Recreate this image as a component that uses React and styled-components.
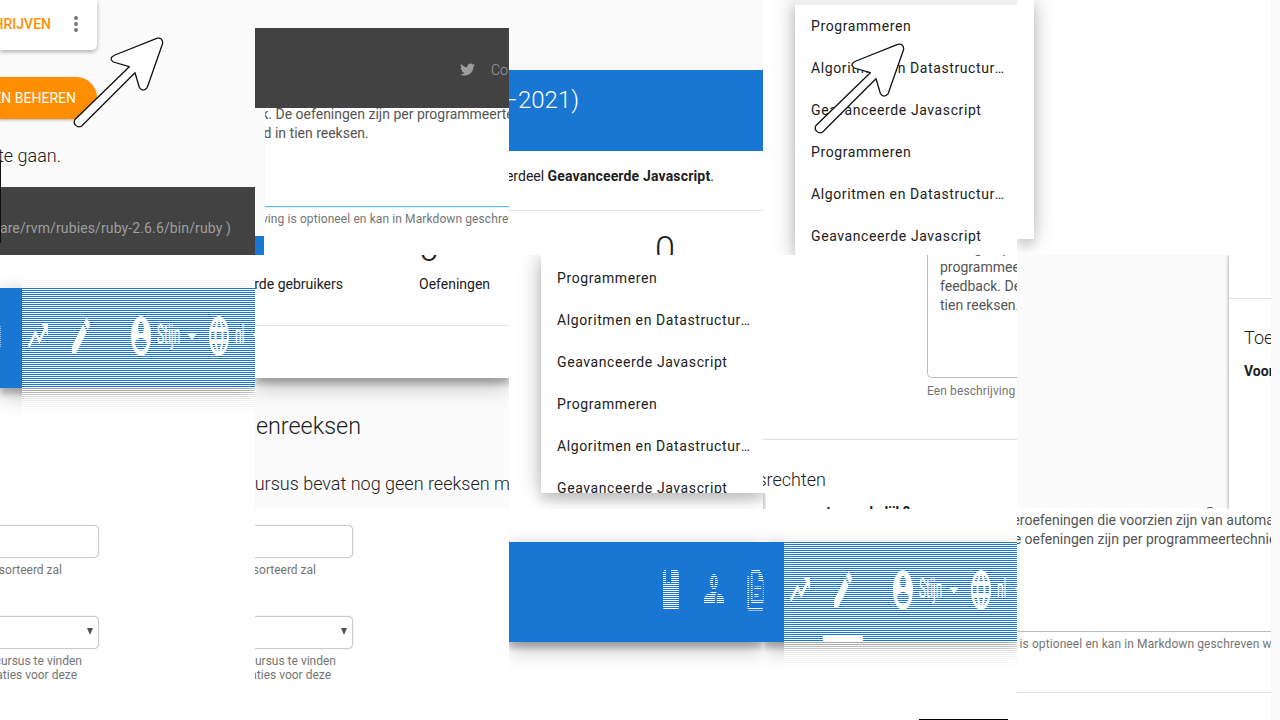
import React from "react";
import styled, { createGlobalStyle, css } from "styled-components";
import { MdLanguage } from "react-icons/md";
import { FaTwitter } from "react-icons/fa";

const BLUE = "#1976d2";
const LIFT = "0 10px 20px rgba(0,0,0,.19), 0 6px 6px rgba(0,0,0,.23), 0 -2px 16px rgba(0,0,0,.08)";
const MENU_LIFT = "0 0 22px rgba(0,0,0,.26), 0 8px 10px rgba(0,0,0,.12)";

const Global = createGlobalStyle`
  html, body { margin: 0; padding: 0; background: #fff; }
  body { font-family: Roboto, "Liberation Sans", sans-serif; font-size: 14px; color: #212121; }
`;

const Stage = styled.div`
  width: 1280px;
  height: 720px;
  overflow: hidden;
  display: grid;
  grid-template-columns: 255px 254px 254px 254px 254px 9px;
  grid-template-rows: 255px 254px 211px;
`;

const Tile = styled.section`
  position: relative;
  overflow: hidden;
  min-width: 0;
  background: ${(p) => p.$bg || "#fff"};
`;

const Edge = styled.div`
  grid-column: 6;
  grid-row: 1 / 4;
  background: #fafafa;
`;

const Ending = styled.div`
  display: flex;
  justify-content: flex-end;
  white-space: nowrap;
  width: ${(p) => p.$end}px;
`;

const Divider = styled.div`
  height: 1px;
  background: ${(p) => p.$color || "#e0e0e0"};
  margin-top: ${(p) => p.$top || 0}px;
`;

/* cursor arrow */
const ArrowSvg = styled.svg`
  position: absolute;
  left: ${(p) => p.$x}px;
  top: ${(p) => p.$y}px;
  width: 100px;
  height: 100px;
  z-index: 3;
`;
const Arrow = ({ x, y }) => (
  <ArrowSvg $x={x} $y={y} viewBox="0 0 100 100">
    <path
      d="M45 20 L86.7 3.3 Q92.7 2 92.7 8.3 L77.3 52.3 Q73 58 69.3 52.3 L65 37.7 L11.7 91 A4.8 4.8 0 0 1 5 84.5 L59.3 31.7 L43.3 27 Q38 23 45 20Z"
      fill="#fff"
      stroke="#111"
      strokeWidth="1.3"
      strokeLinejoin="round"
    />
  </ArrowSvg>
);

/* top-left tile */
const ActionCard = styled.div`
  width: 97px;
  height: 50px;
  padding: 0 9px 2px 0;
  box-sizing: border-box;
  display: flex;
  justify-content: flex-end;
  align-items: center;
  gap: 13px;
  background: #fff;
  border-radius: 0 0 5px 0;
  box-shadow: 0 2px 4px rgba(0,0,0,.3);
  overflow: hidden;
`;
const ActionText = styled.span`
  color: #ff8f00;
  font-weight: 500;
  white-space: nowrap;
`;
const DotsIcon = styled.svg`
  width: 24px;
  height: 24px;
  flex: none;
  fill: #757575;
`;
const ManageButton = styled.div`
  width: 97px;
  height: 42px;
  margin-top: 27px;
  padding-right: 21px;
  box-sizing: border-box;
  display: flex;
  justify-content: flex-end;
  align-items: center;
  background: #ff8f00;
  color: #fff;
  white-space: nowrap;
  border-radius: 0 21px 21px 0;
  box-shadow: 0 1px 3px rgba(0,0,0,.3);
  overflow: hidden;
`;
const LeadText = styled(Ending)`
  margin-top: ${(p) => p.$top}px;
  font-size: 18px;
  font-weight: 300;
  line-height: 24px;
`;
const FooterBand = styled.div`
  height: 68px;
  margin-top: 19px;
  padding-top: 31px;
  box-sizing: border-box;
  background: #424242;
  color: #9e9e9e;
  line-height: 20px;
  letter-spacing: .12px;
`;
const Hairline = styled.div`
  position: absolute;
  left: 0;
  top: 160px;
  width: 1px;
  height: 83px;
  background: #111;
`;

/* dark footer slice */
const Spacer = styled.div`
  height: ${(p) => p.$h}px;
  background: ${(p) => p.$bg || "transparent"};
`;
const ContactBand = styled.div`
  height: 80px;
  padding: 3px 0 0 205px;
  box-sizing: border-box;
  display: flex;
  align-items: center;
  gap: 16px;
  background: #424242;
  color: #9e9e9e;
  font-weight: 300;
  white-space: nowrap;
  svg { width: 15px; height: 15px; flex: none; }
`;
const SliceRow = styled.div`
  display: flex;
  height: 147px;
`;
const Gutter = styled.div`
  width: 10px;
  flex: none;
  display: flex;
  flex-direction: column;
  justify-content: flex-end;
`;
const GutterBlue = styled.div`
  width: 9px;
  height: 19px;
  background: ${BLUE};
`;
const SliceCard = styled.div`
  flex: 1;
  min-width: 0;
  overflow: hidden;
  background: #fff;
`;
const TextLine = styled.div`
  line-height: 19px;
  white-space: nowrap;
  color: #555;
  margin-left: ${(p) => p.$left || 0}px;
  margin-top: ${(p) => p.$top || 0}px;
`;
const FocusLine = styled.div`
  height: 2px;
  margin-top: 63px;
  background: linear-gradient(#64b5f6 0 60%, #e3f2fd 60%);
`;
const Helper = styled.div`
  font-size: 12px;
  line-height: 16px;
  letter-spacing: .1px;
  color: #757575;
  white-space: nowrap;
  margin-left: ${(p) => p.$left || 0}px;
  margin-top: ${(p) => p.$top || 0}px;
`;

/* course title slice */
const TitleBand = styled.div`
  height: 81px;
  padding-top: 14px;
  box-sizing: border-box;
  background: ${BLUE};
  color: #fff;
  font-size: 24px;
  font-weight: 300;
  line-height: 32px;
`;
const IntroLine = styled(Ending)`
  line-height: 20px;
  margin-top: 15px;
  b { font-weight: 700; letter-spacing: .17px; }
`;
const Digit = styled.div`
  font-size: 36px;
  font-weight: 300;
  line-height: 36px;
  margin-top: ${(p) => p.$top}px;
  margin-left: ${(p) => p.$left}px;
`;

/* dropdown menu */
const Menu = styled.div`
  margin-left: 32px;
  width: 222px;
  height: ${(p) => p.$h}px;
  padding-top: ${(p) => p.$pad || 0}px;
  box-sizing: border-box;
  background: #fff;
  box-shadow: ${MENU_LIFT};
  overflow: hidden;
`;
const MenuTop = styled.div`
  height: 5px;
  background: #eee;
`;
const MenuItem = styled.div`
  height: 42px;
  padding-left: 16px;
  line-height: 42px;
  letter-spacing: .6px;
  color: #212121;
  width: 195px;
  box-sizing: content-box;
  white-space: nowrap;
  overflow: hidden;
  text-overflow: ellipsis;
`;
const MenuTail = styled.div`
  width: 17px;
  height: 239px;
  background: #fff;
  box-shadow: ${MENU_LIFT};
`;
const MenuCorner = styled.div`
  position: absolute;
  left: 0;
  top: 238px;
  width: 3px;
  height: 16px;
  background: linear-gradient(90deg, #c4c4c4, #f0f0f0);
`;
const MENU = ["Programmeren", "Algoritmen en Datastructuren", "Geavanceerde Javascript"];
const MenuItems = () =>
  [...MENU, ...MENU].map((t, i) => <MenuItem key={i}>{t}</MenuItem>);

/* navigation bar */
const Bar = styled.div`
  position: relative;
  height: 100px;
  margin-top: 33px;
  padding-top: 36px;
  box-sizing: border-box;
  display: flex;
  align-items: flex-start;
  background: ${BLUE};
  color: #fff;
  box-shadow: ${LIFT};
  &::after {
    content: "";
    position: absolute;
    left: 0;
    top: 0;
    bottom: 0;
    width: ${(p) => p.$solid}px;
    background: repeating-linear-gradient(to bottom, transparent 0 1px, ${BLUE} 1px 2px);
  }
`;
const Scanlines = styled.div`
  position: absolute;
  left: ${(p) => p.$left}px;
  top: 0;
  right: 0;
  bottom: 0;
  background: repeating-linear-gradient(to bottom, #fff 0 1px, transparent 1px 2px);
`;
const glyphCss = css`
  flex: none;
  width: 24px;
  height: 24px;
  fill: #fff;
  transform: scaleY(2);
  margin-left: ${(p) => p.$ml || 0}px;
`;
const Glyph = styled.svg`
  ${glyphCss}
`;
const GlobeGlyph = styled(MdLanguage)`
  ${glyphCss}
`;
const NavLabel = styled.span`
  flex: none;
  display: block;
  width: ${(p) => p.$w}px;
  margin: -2px 0 0 ${(p) => p.$ml}px;
  line-height: 24px;
  white-space: nowrap;
  transform: scale(.85, 2);
  transform-origin: 0 50%;
`;
const Caret = styled.span`
  flex: none;
  width: 0;
  height: 0;
  margin: 10px 0 0 ${(p) => p.$ml}px;
  border-left: 4px solid transparent;
  border-right: 4px solid transparent;
  border-top: 6px solid #fff;
`;
const Indicator = styled.div`
  position: absolute;
  left: 60px;
  bottom: 0;
  width: 40px;
  height: 6px;
  background: #fff;
`;
const ForeLine = styled.div`
  position: relative;
  width: 89px;
  height: 1px;
  margin: 77px 0 0 156px;
  background: #000;
`;

const BookGlyph = ({ ml }) => (
  <Glyph $ml={ml} viewBox="0 0 24 24">
    <path d="M18,22A2,2 0 0,0 20,20V4C20,2.89 19.1,2 18,2H12V9L9.5,7.5L7,9V2H6A2,2 0 0,0 4,4V20A2,2 0 0,0 6,22H18Z" />
  </Glyph>
);
const PeopleGlyph = ({ ml }) => (
  <Glyph $ml={ml} viewBox="0 0 24 24">
    <path fillRule="evenodd" d="M12 4a3.9 3.9 0 1 0 0 7.8A3.9 3.9 0 0 0 12 4zM12 5.4a1 2.5 0 1 1 0 5 1 2.5 0 0 1 0-5z" />
    <path d="M2 19v-2.2C2 14.2 7.6 13 12 13c.9 0 1.8.1 2.7.2-1.1.8-1.8 1.9-1.8 3.3V19H2zM14.6 19v-2.5c0-1.2.7-2.2 2-2.9 2.7.5 5.4 1.6 5.4 3.2V19h-7.4z" />
  </Glyph>
);
const DocsGlyph = ({ ml }) => (
  <Glyph $ml={ml} viewBox="-2 -2 28 28">
    <path d="M16 0H8C6.9 0 6 .9 6 2V18C6 19.1 6.9 20 8 20H20C21.1 20 22 19.1 22 18V6L16 0M20 18H8V2H15V7H20V18M4 4V22H20V24H4C2.9 24 2 23.1 2 22V4H4M10 10V12H18V10H10M10 14V16H15V14H10Z" />
  </Glyph>
);
const NavRight = ({ gap }) => (
  <>
    <DocsGlyph ml={-20} />
    <Glyph $ml={gap} viewBox="0 0 24 24">
      <path d="M16 6l2.29 2.29-4.88 4.88-4-4L2 16.59 3.41 18l6-6 4 4 6.3-6.29L22 12V6z" />
    </Glyph>
    <Glyph $ml={19} viewBox="0 0 24 24">
      <path d="M20.71,7.04C21.1,6.65 21.1,6 20.71,5.63L18.37,3.29C18,2.9 17.35,2.9 16.96,3.29L15.12,5.12L18.87,8.87M3,17.25V21H6.75L17.81,9.93L14.06,6.18L3,17.25Z" />
    </Glyph>
    <Glyph $ml={36} viewBox="0 0 24 24">
      <path d="M12 2C6.48 2 2 6.48 2 12s4.48 10 10 10 10-4.48 10-10S17.52 2 12 2zm0 3c1.66 0 3 1.34 3 3s-1.34 3-3 3-3-1.34-3-3 1.34-3 3-3zm0 14.2c-2.5 0-4.71-1.28-6-3.22.03-1.99 4-3.08 6-3.08 1.99 0 5.97 1.09 6 3.08-1.29 1.94-3.5 3.22-6 3.22z" />
    </Glyph>
    <NavLabel $w={26} $ml={4}>Stijn</NavLabel>
    <Caret $ml={5} />
    <GlobeGlyph $ml={11} />
    <NavLabel $w={11} $ml={4}>nl</NavLabel>
    <Caret $ml={7} />
  </>
);

/* stats + series slice */
const WhitePanel = styled.div`
  height: 123px;
  background: #fff;
  box-shadow: ${LIFT};
  overflow: hidden;
`;
const StatsRow = styled.div`
  display: flex;
  gap: 76px;
  margin-top: 7px;
  line-height: 20px;
`;
const StatLabel = styled.div`
  white-space: nowrap;
`;
const SeriesHead = styled(Ending)`
  margin-top: 32px;
  font-size: 23.4px;
  font-weight: 300;
  line-height: 32px;
`;
const SeriesText = styled.div`
  margin: 30px 0 0 ${(p) => p.$left}px;
  font-size: 18px;
  font-weight: 300;
  line-height: 24px;
  white-space: nowrap;
`;

/* description slice */
const AreaBox = styled.div`
  margin: -17px 0 0 164px;
  height: 140px;
  width: 140px;
  padding: 1px 0 0 12px;
  box-sizing: border-box;
  border-left: 1px solid #bdbdbd;
  border-bottom: 1px solid #bdbdbd;
  border-bottom-left-radius: 5px;
  overflow: hidden;
`;
const AreaLine = styled(TextLine)`
  width: 200px;
`;
const RightsTitle = styled(Ending)`
  margin-top: 28px;
  font-size: 18px;
  font-weight: 300;
  line-height: 24px;
`;
const BoldLine = styled(Ending)`
  margin-top: 10px;
  font-weight: 700;
  line-height: 20px;
`;

/* rights card slice */
const SplitRow = styled.div`
  display: flex;
  height: 100%;
`;
const GreyPane = styled.div`
  width: 212px;
  flex: none;
  background: #fafafa;
  display: flex;
  flex-direction: column;
  justify-content: flex-end;
`;
const TinyArc = styled.div`
  width: 6px;
  height: 2px;
  margin-left: 190px;
  border-top: 1px solid #555;
  border-radius: 4px 4px 0 0;
  box-sizing: border-box;
`;
const RightsCard = styled.div`
  flex: 1;
  min-width: 0;
  background: #fff;
  padding-top: 43px;
  box-sizing: border-box;
  box-shadow: -1px 0 3px rgba(0,0,0,.25);
  overflow: hidden;
`;
const CardTitle = styled.div`
  margin: 27px 0 0 15px;
  font-size: 18px;
  font-weight: 300;
  line-height: 24px;
  white-space: nowrap;
`;
const CardBold = styled.div`
  margin: 11px 0 0 15px;
  font-weight: 700;
  line-height: 20px;
  white-space: nowrap;
`;

/* form fragments */
const FieldStack = styled.div`
  margin-left: ${(p) => p.$left}px;
  padding-top: 16px;
`;
const Field = styled.div`
  width: 99px;
  height: 33px;
  margin-top: ${(p) => p.$top || 0}px;
  padding-right: 5px;
  box-sizing: border-box;
  display: flex;
  align-items: center;
  justify-content: flex-end;
  background: #fff;
  border: 1px solid #ccc;
  border-left: none;
  border-radius: 0 5px 5px 0;
  box-shadow: 0 0 1px #bbb;
`;
const SelectCaret = styled.span`
  width: 0;
  height: 0;
  margin-bottom: 2px;
  border-left: 3px solid transparent;
  border-right: 3px solid transparent;
  border-top: 7px solid #555;
`;
const FieldHelp = styled(Ending)`
  font-size: 12px;
  line-height: 14px;
  color: #757575;
  margin-top: ${(p) => p.$top || 0}px;
`;
const FormBits = ({ left }) => (
  <FieldStack $left={left}>
    <Field />
    <FieldHelp $end={62} $top={5}>waarop gesorteerd zal</FieldHelp>
    <Field $top={39}>
      <SelectCaret />
    </Field>
    <FieldHelp $end={82} $top={5}>om de cursus te vinden</FieldHelp>
    <FieldHelp $end={77}>registraties voor deze</FieldHelp>
  </FieldStack>
);

const HELP = "Een beschrijving is optioneel en kan in Markdown geschreven worden.";

export default function App() {
  return (
    <Stage>
      <Global />

      <Tile $bg="#fafafa">
        <ActionCard>
          <ActionText>INSCHRIJVEN</ActionText>
          <DotsIcon viewBox="0 0 24 24">
            <path d="M12,16A2,2 0 0,1 14,18A2,2 0 0,1 12,20A2,2 0 0,1 10,18A2,2 0 0,1 12,16M12,10A2,2 0 0,1 14,12A2,2 0 0,1 12,14A2,2 0 0,1 10,12A2,2 0 0,1 12,10M12,4A2,2 0 0,1 14,6A2,2 0 0,1 12,8A2,2 0 0,1 10,6A2,2 0 0,1 12,4Z" />
          </DotsIcon>
        </ActionCard>
        <ManageButton>REEKSEN BEHEREN</ManageButton>
        <LeadText $end={61} $top={25}>om verder te gaan.</LeadText>
        <FooterBand>
          <Ending $end={231}>/usr/local/share/rvm/rubies/ruby-2.6.6/bin/ruby )</Ending>
        </FooterBand>
        <Hairline />
        <Arrow x={70} y={35} />
      </Tile>

      <Tile $bg="#fafafa">
        <Spacer $h={28} />
        <ContactBand>
          <FaTwitter />
          <span>Contact</span>
        </ContactBand>
        <SliceRow>
          <Gutter>
            <GutterBlue />
          </Gutter>
          <SliceCard>
            <TextLine $left={-54} $top={-3}>feedback. De oefeningen zijn per programmeertechniek</TextLine>
            <TextLine $left={-54}>ingedeeld in tien reeksen.</TextLine>
            <FocusLine />
            <Helper $left={-69} $top={3}>{HELP}</Helper>
          </SliceCard>
        </SliceRow>
      </Tile>

      <Tile>
        <Spacer $h={70} $bg="#fafafa" />
        <TitleBand>
          <Ending $end={70}>Geavanceerde Javascript (2020–2021)</Ending>
        </TitleBand>
        <IntroLine $end={205}>
          <span>Deze cursus is een onderdeel <b>Geavanceerde Javascript</b>.</span>
        </IntroLine>
        <Divider $top={24} />
        <Digit $top={21} $left={146}>0</Digit>
      </Tile>

      <Tile>
        <Menu $h={255}>
          <MenuTop />
          <MenuItems />
        </Menu>
        <Arrow x={48} y={41} />
      </Tile>

      <Tile>
        <MenuTail />
      </Tile>

      <Edge />

      <Tile>
        <Bar $solid={22}>
          <NavRight gap={22} />
        </Bar>
        <Scanlines $left={22} />
      </Tile>

      <Tile $bg="#fafafa">
        <WhitePanel>
          <Digit $top={-24} $left={164}>0</Digit>
          <StatsRow>
            <Ending $end={88}>Geregistreerde gebruikers</Ending>
            <StatLabel>Oefeningen</StatLabel>
          </StatsRow>
          <Divider $top={31} />
        </WhitePanel>
        <SeriesHead $end={106}>Oefeningenreeksen</SeriesHead>
        <SeriesText $left={-53}>Deze cursus bevat nog geen reeksen met oefeningen.</SeriesText>
      </Tile>

      <Tile>
        <Menu $h={238} $pad={2}>
          <MenuItems />
        </Menu>
      </Tile>

      <Tile>
        <AreaBox>
          <AreaLine>Deze groep bevat</AreaLine>
          <AreaLine>programmeeroefeningen</AreaLine>
          <AreaLine>feedback. De oefeningen</AreaLine>
          <AreaLine>tien reeksen.</AreaLine>
        </AreaBox>
        <Helper $left={164} $top={5}>{HELP}</Helper>
        <Divider $top={40} />
        <RightsTitle $end={63}>Toegangsrechten</RightsTitle>
        <BoldLine $end={147}>Voor wie is deze cursus toegankelijk?</BoldLine>
        <MenuCorner />
      </Tile>

      <Tile $bg="#fafafa">
        <SplitRow>
          <GreyPane>
            <TinyArc />
          </GreyPane>
          <RightsCard>
            <Divider />
            <CardTitle>Toegangsrechten</CardTitle>
            <CardBold>Voor wie is deze cursus toegankelijk?</CardBold>
          </RightsCard>
        </SplitRow>
      </Tile>

      <Tile>
        <FormBits left={0} />
      </Tile>

      <Tile>
        <FormBits left={-1} />
      </Tile>

      <Tile>
        <Bar $solid={254}>
          <BookGlyph ml={150} />
          <PeopleGlyph ml={19} />
          <DocsGlyph ml={18} />
        </Bar>
      </Tile>

      <Tile>
        <Bar $solid={21}>
          <NavRight gap={21} />
          <Indicator />
        </Bar>
        <Scanlines $left={21} />
        <ForeLine />
      </Tile>

      <Tile>
        <TextLine $left={-77} $top={2}>programmeeroefeningen die voorzien zijn van automatische</TextLine>
        <TextLine $left={-77}>feedback. De oefeningen zijn per programmeertechniek</TextLine>
        <Divider $top={82} $color="#bdbdbd" />
        <Helper $left={-89} $top={4}>{HELP}</Helper>
        <Divider $top={40} />
      </Tile>
    </Stage>
  );
}
